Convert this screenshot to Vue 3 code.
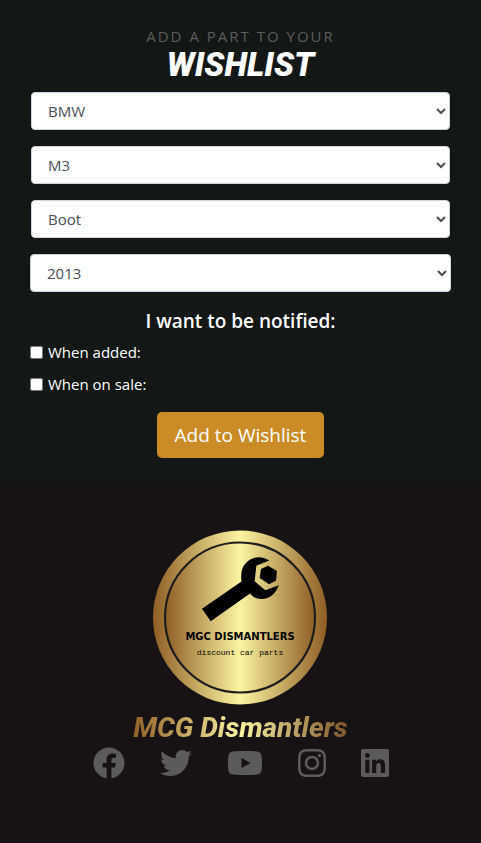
<script setup>
import { reactive } from 'vue'

const fields = reactive([
  { id: 'make', label: 'Make', value: 'BMW', options: ['BMW'] },
  { id: 'model', label: 'Model', value: 'M3', options: ['M3'] },
  { id: 'part', label: 'Part', value: 'Boot', options: ['Boot'] },
  { id: 'year', label: 'Year', value: '2013', options: ['2013'], wide: true }
])

const notices = reactive([
  { id: 'when-added', label: 'When added:', checked: false },
  { id: 'when-sale', label: 'When on sale:', checked: false }
])

const socials = [
  {
    name: 'Facebook',
    width: 512,
    path: 'M504 256C504 119 393 8 256 8S8 119 8 256c0 123.78 90.69 226.38 209.25 245V327.69h-63V256h63v-54.64c0-62.15 37-96.48 93.67-96.48 27.14 0 55.52 4.84 55.52 4.84v61h-31.28c-30.8 0-40.41 19.12-40.41 38.73V256h68.78l-11 71.69h-57.78V501C413.31 482.38 504 379.78 504 256z'
  },
  {
    name: 'Twitter',
    width: 512,
    path: 'M459.37 151.716c.325 4.548.325 9.097.325 13.645 0 138.72-105.583 298.558-298.558 298.558-59.452 0-114.68-17.219-161.137-47.106 8.447.974 16.568 1.299 25.34 1.299 49.055 0 94.213-16.568 130.274-44.832-46.132-.975-84.792-31.188-98.112-72.772 6.498.974 12.995 1.624 19.818 1.624 9.421 0 18.843-1.3 27.614-3.573-48.081-9.747-84.143-51.98-84.143-102.985v-1.299c13.969 7.797 30.214 12.67 47.431 13.319-28.264-18.843-46.781-51.005-46.781-87.391 0-19.492 5.197-37.36 14.294-52.954 51.655 63.675 129.3 105.258 216.365 109.807-1.624-7.797-2.599-15.918-2.599-24.04 0-57.828 46.782-104.934 104.934-104.934 30.213 0 57.502 12.67 76.67 33.137 23.715-4.548 46.456-13.32 66.599-25.34-7.798 24.366-24.366 44.833-46.132 57.827 21.117-2.273 41.584-8.122 60.426-16.243-14.292 20.791-32.161 39.308-52.628 54.253z'
  },
  {
    name: 'YouTube',
    width: 576,
    path: 'M549.655 124.083c-6.281-23.65-24.787-42.276-48.284-48.597C458.781 64 288 64 288 64S117.22 64 74.629 75.486c-23.497 6.322-42.003 24.947-48.284 48.597-11.412 42.867-11.412 132.305-11.412 132.305s0 89.438 11.412 132.305c6.281 23.65 24.787 41.5 48.284 47.821C117.22 448 288 448 288 448s170.78 0 213.371-11.486c23.497-6.321 42.003-24.171 48.284-47.821 11.412-42.867 11.412-132.305 11.412-132.305s0-89.438-11.412-132.305zm-317.51 213.508V175.185l142.739 81.205-142.739 81.201z'
  },
  {
    name: 'Instagram',
    width: 448,
    path: 'M224.1 141c-63.6 0-114.9 51.3-114.9 114.9s51.3 114.9 114.9 114.9S339 319.5 339 255.9 287.7 141 224.1 141zm0 189.6c-41.1 0-74.7-33.5-74.7-74.7s33.5-74.7 74.7-74.7 74.7 33.5 74.7 74.7-33.6 74.7-74.7 74.7zm146.4-194.3c0 14.9-12 26.8-26.8 26.8-14.9 0-26.8-12-26.8-26.8s12-26.8 26.8-26.8 26.8 12 26.8 26.8zm76.1 27.2c-1.7-35.9-9.9-67.7-36.2-93.9-26.2-26.2-58-34.4-93.9-36.2-37-2.1-147.9-2.1-184.9 0-35.8 1.7-67.6 9.9-93.9 36.1s-34.4 58-36.2 93.9c-2.1 37-2.1 147.9 0 184.9 1.7 35.9 9.9 67.7 36.2 93.9s58 34.4 93.9 36.2c37 2.1 147.9 2.1 184.9 0 35.9-1.7 67.7-9.9 93.9-36.2 26.2-26.2 34.4-58 36.2-93.9 2.1-37 2.1-147.8 0-184.8zM398.8 388c-7.8 19.6-22.9 34.7-42.6 42.6-29.5 11.7-99.5 9-132.1 9s-102.7 2.6-132.1-9c-19.6-7.8-34.7-22.9-42.6-42.6-11.7-29.5-9-99.5-9-132.1s-2.6-102.7 9-132.1c7.8-19.6 22.9-34.7 42.6-42.6 29.5-11.7 99.5-9 132.1-9s102.7-2.6 132.1 9c19.6 7.8 34.7 22.9 42.6 42.6 11.7 29.5 9 99.5 9 132.1s2.7 102.7-9 132.1z'
  },
  {
    name: 'LinkedIn',
    width: 448,
    path: 'M416 32H31.9C14.3 32 0 46.5 0 64.3v383.4C0 465.5 14.3 480 31.9 480H416c17.6 0 32-14.5 32-32.3V64.3c0-17.8-14.4-32.3-32-32.3zM135.4 416H69V202.2h66.5V416zm-33.2-243c-21.3 0-38.5-17.3-38.5-38.5S80.9 96 102.2 96c21.2 0 38.5 17.3 38.5 38.5 0 21.3-17.2 38.5-38.5 38.5zm282.1 243h-66.4V312c0-24.8-.5-56.7-34.5-56.7-34.6 0-39.9 27-39.9 54.9V416h-66.4V202.2h63.7v29.2h.9c8.9-16.8 30.6-34.5 62.9-34.5 67.2 0 79.7 44.3 79.7 101.9V416z'
  }
]
</script>

<template>
  <div class="page">
    <main class="wishlist">
      <h1 class="title">
        <span class="eyebrow">ADD A PART TO YOUR</span>
        <span class="headline">WISHLIST</span>
      </h1>
      <form class="form" @submit.prevent>
        <div v-for="f in fields" :key="f.id" class="field" :class="{ wide: f.wide }">
          <select :id="f.id" v-model="f.value" class="select" :aria-label="f.label">
            <option v-for="o in f.options" :key="o">{{ o }}</option>
          </select>
        </div>
        <fieldset class="notify">
          <legend class="legend">I want to be notified:</legend>
          <div v-for="n in notices" :key="n.id" class="check">
            <input :id="n.id" v-model="n.checked" type="checkbox" class="box" />
            <label :for="n.id">{{ n.label }}</label>
          </div>
        </fieldset>
        <button type="submit" class="submit">Add to Wishlist</button>
      </form>
    </main>

    <footer class="footer">
      <svg class="logo" viewBox="0 0 175 175" role="img" aria-label="MGC Dismantlers">
        <defs>
          <linearGradient id="gold">
            <stop offset="0" stop-color="#8f5e25" />
            <stop offset="0.5" stop-color="#fbf4a1" />
            <stop offset="1" stop-color="#8f5e25" />
          </linearGradient>
        </defs>
        <circle cx="87" cy="87.500" r="87" fill="url(#gold)" />
        <circle cx="87" cy="87.500" r="75" fill="url(#gold)" stroke="#1d1d1d" stroke-width="2.2" />
        <path d="M49 78.700 88.500 51.500C87.500 43 89 37.500 92.500 33.500C98.500 26 108 25.500 116.300 30.500L103.300 35.700 101.700 51.300 112.300 60.300 125.700 55.300C122.500 65 115 69.500 108 69C103.500 68.700 100 67 97 63.500L57.700 91.300Z" />
        <path d="M115 35.700 124 41 123 50.700 116 54.300 106.700 48 108 39Z" />
        <text class="logo-name" x="87" y="110" text-anchor="middle">MGC DISMANTLERS</text>
        <text class="logo-tag" x="87" y="125" text-anchor="middle">discount car parts</text>
      </svg>
      <p class="brand">MCG Dismantlers</p>
      <nav class="socials" aria-label="Social media">
        <a v-for="s in socials" :key="s.name" href="#" :aria-label="s.name">
          <svg class="icon" :viewBox="`0 0 ${s.width} 512`" aria-hidden="true"><path :d="s.path" /></svg>
        </a>
      </nav>
    </footer>
  </div>
</template>

<style>
body {
  margin: 0;
  background: #171214;
}
</style>

<style scoped>
.page {
  display: flex;
  flex-direction: column;
  min-height: 100vh;
  font-family: "Segoe UI", "Open Sans", sans-serif;
  font-size: 15px;
  line-height: 24px;
  color: #fff;
  background: #171214;
}
.wishlist {
  padding: 24px 30px;
  background: #131715;
}
.title {
  display: flex;
  flex-direction: column;
  align-items: center;
  margin: 0 0 10px;
  font-weight: 400;
}
.eyebrow {
  font-size: 15px;
  line-height: 24px;
  letter-spacing: 2px;
  color: #5c5e5d;
}
.headline {
  font-family: Roboto, sans-serif;
  font-size: 33px;
  line-height: 34px;
  font-weight: 900;
  font-style: italic;
}
.form {
  display: flex;
  flex-direction: column;
  gap: 16px;
}
.field {
  display: flex;
  padding: 0 1px;
}
.field.wide {
  padding: 0;
}
.select {
  flex: 1;
  min-width: 0;
  height: 38px;
  padding: 6px 12px;
  border: 1px solid #ced4da;
  border-radius: 4px;
  background: #fff;
  color: #495057;
  font-family: inherit;
  font-size: 15px;
}
.notify {
  display: flex;
  flex-direction: column;
  gap: 8px;
  min-width: 0;
  margin: 0;
  padding: 0;
  border: 0;
}
.legend {
  width: 100%;
  margin-bottom: 6px;
  padding: 0;
  text-align: center;
  font-size: 19px;
  line-height: 26px;
  font-weight: 600;
}
.check {
  display: flex;
  align-items: center;
  gap: 5px;
}
.box {
  width: 13px;
  height: 13px;
  margin: 0;
}
.submit {
  align-self: center;
  padding: 8px 18px;
  border: 0;
  border-radius: 5px;
  background: #cb8c27;
  color: #fff;
  font-family: inherit;
  font-size: 19px;
  line-height: 30px;
}
.footer {
  display: flex;
  flex-direction: column;
  align-items: center;
  padding: 48px 16px;
}
.logo {
  display: block;
  width: 175px;
  height: 175px;
}
.logo-name {
  font-family: "DejaVu Sans", sans-serif;
  font-size: 10px;
  font-weight: 700;
}
.logo-tag {
  font-family: "Liberation Mono", monospace;
  font-size: 8px;
}
.brand {
  margin: 4px 0 0;
  padding: 0 2px;
  font-family: Roboto, sans-serif;
  font-size: 28px;
  line-height: 38px;
  font-weight: 800;
  font-style: italic;
  color: transparent;
  background: linear-gradient(90deg, #8f5e25, #fbf4a1 50%, #7a5029);
  background-clip: text;
}
.socials {
  display: flex;
  gap: 35px;
}
.socials a {
  display: flex;
}
.icon {
  height: 32px;
  fill: #5c5a5b;
}
</style>
